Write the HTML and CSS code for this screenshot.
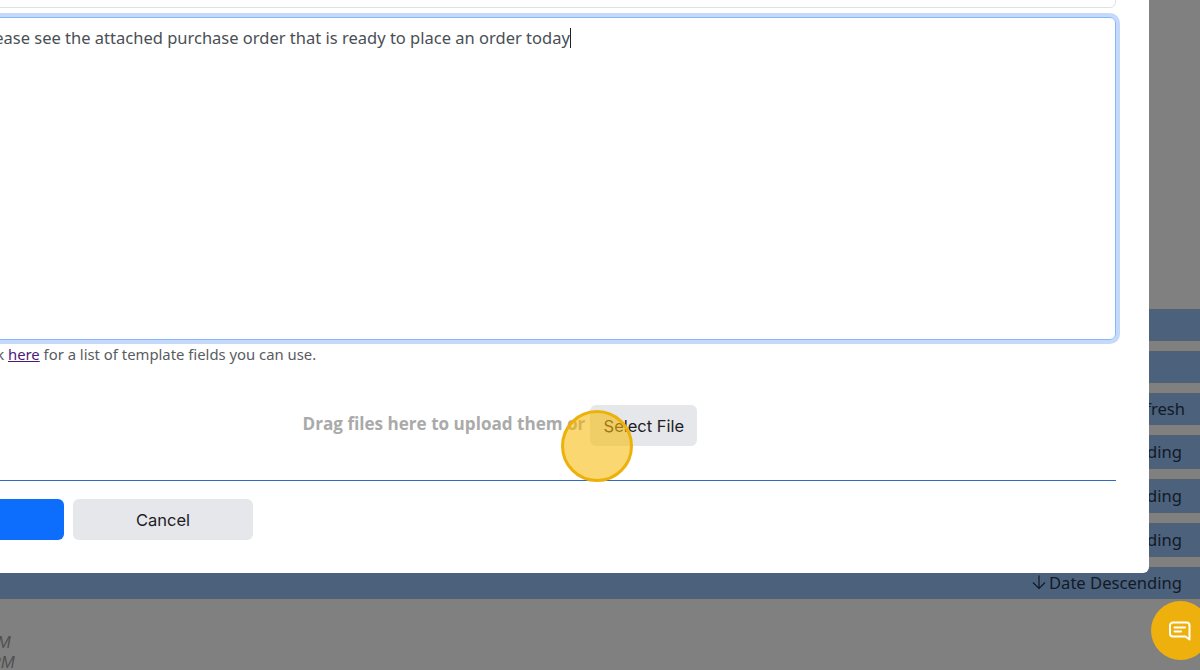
FILE: index.html
```html
<!DOCTYPE html>
<html lang="en">
<head>
<meta charset="utf-8">
<title>Send purchase order</title>
<link rel="stylesheet" href="styles.css">
</head>
<body>
<div class="page">
  <div class="rows">
    <div class="row"></div>
    <div class="row"></div>
    <div class="row row-refresh">Refresh</div>
    <div class="row row-tall">Date Descending</div>
    <div class="row row-tall">Date Descending</div>
    <div class="row row-tall">Date Descending</div>
    <div class="row">
      <svg class="arrow" viewBox="0 0 16 16" width="16" height="16" aria-hidden="true"><path d="M8 1.5V14.5M2 8.5L8 14.5L14 8.5" fill="none" stroke="currentColor" stroke-width="1.2"/></svg>
      <span>Date Descending</span>
    </div>
  </div>
  <div class="times">
    <div class="time time-first">12:00 PM</div>
    <div class="time">12:00 PM</div>
  </div>
</div>

<div class="modal">
  <div class="field-prev"></div>
  <div class="editor">Please see the attached purchase order that is ready to place an order today<span class="caret"></span></div>
  <p class="hint">Click <a class="link" href="#">here</a> for a list of template fields you can use.</p>
  <div class="drop">
    <span class="drop-text">Drag files here to upload them or</span>
    <button class="btn btn-grey btn-file">Select File</button>
  </div>
  <div class="actions">
    <button class="btn btn-blue">Send</button>
    <button class="btn btn-grey btn-cancel">Cancel</button>
  </div>
</div>

<div class="click-ring"></div>

<div class="chat">
  <svg viewBox="0 0 26 24" width="26" height="24" aria-hidden="true"><path d="M6 3.5H19.5A3 3 0 0 1 22.5 6.5V20.5L18.5 17.5H6A3 3 0 0 1 3 14.5V6.5A3 3 0 0 1 6 3.5Z" fill="none" stroke="#fff" stroke-width="2" stroke-linejoin="round"/><path d="M7.5 8.5H18M7.5 12.5H14" fill="none" stroke="#fff" stroke-width="2" stroke-linecap="round"/></svg>
</div>
</body>
</html>
```
FILE: styles.css
```css
* { box-sizing: border-box; }
html, body { margin: 0; height: 100%; overflow: hidden; }
body {
  background: #808080;
  font-family: "Inter", sans-serif;
  color: #14181f;
  width: 1200px;
  height: 670px;
  position: relative;
}
.page { padding-top: 309px; }
.rows { display: flex; flex-direction: column; gap: 10px; }
.row {
  background: #4b617c;
  border-top: 1px solid #55606d;
  border-bottom: 1px solid #55606d;
  height: 32px;
  display: flex;
  align-items: center;
  justify-content: flex-end;
  gap: 2px;
  padding: 0 18px 2px 0;
  font-family: "Noto Sans", sans-serif;
  font-size: 16.6px;
  color: #121a27;
}
.row-tall { height: 34px; }
.row-refresh { padding-right: 15px; }
.arrow { color: #121a27; }
.times {
  padding-top: 33px;
  font-family: "Liberation Sans", sans-serif;
  font-style: italic;
  font-size: 16.5px;
  line-height: 20px;
  color: #505050;
}
.time { margin-left: -56px; }
.time-first { margin-left: -60px; }

.modal {
  position: absolute;
  left: -140px;
  top: -60px;
  width: 1289px;
  height: 633px;
  background: #fff;
  border-radius: 0 0 6px 6px;
  padding-right: 33px;
}
.field-prev {
  height: 68px;
  margin-left: 100px;
  border: 1px solid #dee2e6;
  border-radius: 6px;
}
.editor {
  margin: 9px 0 0 100px;
  height: 323px;
  border: 1px solid #86b7fe;
  border-radius: 6px;
  box-shadow: 0 0 0 4px #c5d9fb;
  padding: 8px 12px 8px 19px;
  font-family: "Noto Sans", sans-serif;
  font-size: 16.5px;
  line-height: 24px;
  color: #4a4f55;
}
.caret {
  display: inline-block;
  width: 1px;
  height: 20px;
  background: #222;
  vertical-align: -4px;
}
.hint {
  margin: 4px 0 0 112px;
  font-family: "Noto Sans", sans-serif;
  font-size: 14.85px;
  line-height: 20px;
  color: #595c62;
}
.link { color: #4b1a7a; }
.drop {
  margin-left: 100px;
  height: 117px;
  border-bottom: 1px solid #2e6cc0;
  display: flex;
  justify-content: center;
  align-items: flex-start;
  padding: 41px 76px 0 0;
  gap: 5px;
}
.drop-text {
  font-family: "Open Sans", sans-serif;
  font-weight: 700;
  font-size: 17.1px;
  line-height: 24px;
  color: #aaaaaa;
  margin-top: 7px;
}
.actions { display: flex; gap: 9px; margin-top: 18px; }
.btn {
  border: 0;
  border-radius: 6px;
  height: 41px;
  font-family: "Inter", sans-serif;
  font-size: 16.5px;
}
.btn-grey { background: #e5e7ea; color: #1d2025; }
.btn-blue { background: #0d6efd; color: #fff; width: 204px; }
.btn-cancel { width: 180px; }
.btn-file { width: 107px; }

.click-ring {
  position: absolute;
  left: 561px;
  top: 410px;
  width: 72px;
  height: 72px;
  border-radius: 50%;
  border: 3px solid #ecb10b;
  background: rgba(246, 186, 8, 0.58);
}
.chat {
  position: absolute;
  left: 1151px;
  top: 601px;
  width: 59px;
  height: 59px;
  border-radius: 50%;
  background: #edb00c;
  display: flex;
  align-items: center;
  padding-left: 16px;
}
```
